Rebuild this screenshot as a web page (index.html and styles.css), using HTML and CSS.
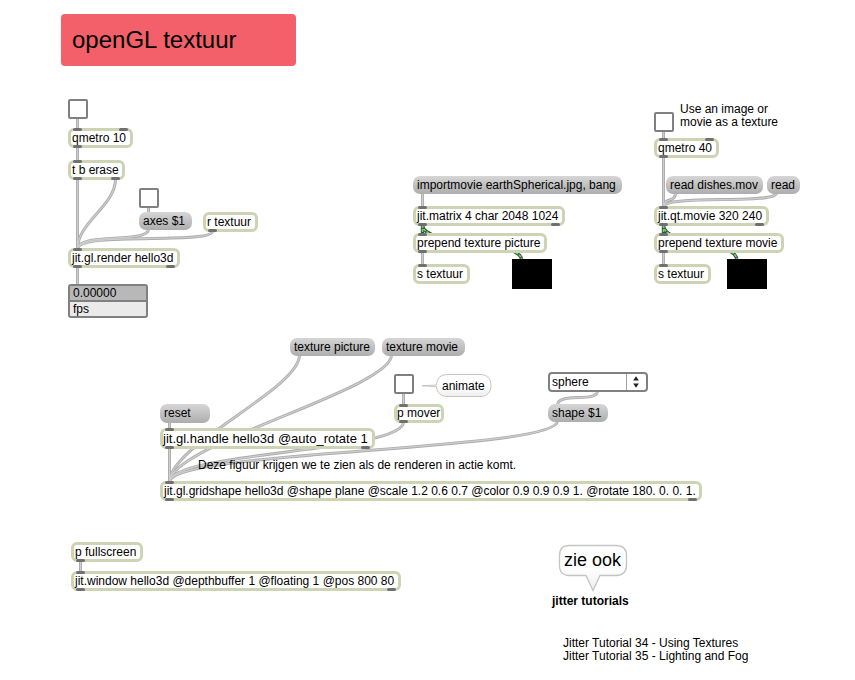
FILE: index.html
```
<!DOCTYPE html>
<html lang="nl">
<head>
<meta charset="utf-8">
<title>openGL textuur</title>
<link rel="stylesheet" href="styles.css">
</head>
<body>
<main class="patch">
  <svg class="cords" width="855" height="680" viewBox="0 0 855 680" fill="none">
    <defs>
      <g id="lines">
        <path d="M77.500 118V130M77.500 147V162M77.500 179V250M77.500 267V285"/>
        <path d="M115.500 179C115.500 206 77.500 222 77.500 249"/>
        <path d="M148.500 207V213M148.500 229C148.500 244 78 232 77.500 249"/>
        <path d="M212.500 231C212.500 245 78 231 77.500 249"/>
        <path d="M422.500 193V208M422.500 252V266"/>
        <path d="M663.500 131V140M663.500 157V208M663.500 252V266"/>
        <path d="M675.500 193C675.500 203 664 197 663.500 207M776.500 193C776.500 205 664 194 663.500 207"/>
        <path d="M403.500 393V406M169.500 421V430M169.500 447V483M80.500 561V573"/>
        <path d="M299.500 355C299.500 389 169.500 445 169.500 482"/>
        <path d="M391.500 355C391.500 389 169.500 445 169.500 482"/>
        <path d="M403.500 422C403.500 452 169.500 452 169.500 482"/>
        <path d="M557.500 421C557.500 451 169.500 450 169.500 482"/>
        <path d="M597.500 391C597.500 403 557.500 392 557.500 405"/>
      </g>
      <g id="matrix-lines">
        <path d="M422.500 225V235M422.500 225C422.500 247 522 238 522 261"/>
        <path d="M663.500 225V235M663.500 225C663.500 247 737 238 737 261"/>
      </g>
    </defs>
    <use href="#lines" class="cord-edge"/>
    <use href="#lines" class="cord-core"/>
    <use href="#matrix-lines" class="matrix-edge"/>
    <use href="#matrix-lines" class="matrix-core"/>
  </svg>

  <h1 class="title">openGL textuur</h1>

  <div class="toggle render-toggle"></div>
  <div class="object qmetro10"><i class="in"></i><i class="in last"></i><i class="out"></i><span>qmetro 10</span></div>
  <div class="object erase"><i class="in"></i><i class="out"></i><i class="out last"></i><span>t b erase</span></div>
  <div class="toggle axes-toggle"></div>
  <div class="message axes"><span>axes $1</span></div>
  <div class="object receive"><i class="out"></i><span>r textuur</span></div>
  <div class="object render"><i class="in"></i><i class="out"></i><i class="out last"></i><span>jit.gl.render hello3d</span></div>
  <div class="fps"><div class="fps-value">0.00000</div><div class="fps-label">fps</div></div>

  <div class="message import"><span>importmovie earthSpherical.jpg, bang</span></div>
  <div class="object matrix"><i class="in"></i><i class="out"></i><i class="out last"></i><span>jit.matrix 4 char 2048 1024</span></div>
  <div class="object prepend-picture"><i class="in"></i><i class="out"></i><span>prepend texture picture</span></div>
  <div class="object send-picture"><i class="in"></i><span>s textuur</span></div>
  <div class="pwindow pwindow-picture"></div>

  <p class="comment use-image">Use an image or<br>movie as a texture</p>
  <div class="toggle movie-toggle"></div>
  <div class="object qmetro40"><i class="in"></i><i class="in last"></i><i class="out"></i><span>qmetro 40</span></div>
  <div class="message dishes"><span>read dishes.mov</span></div>
  <div class="message read"><span>read</span></div>
  <div class="object movie"><i class="in"></i><i class="out"></i><i class="out last"></i><span>jit.qt.movie 320 240</span></div>
  <div class="object prepend-movie"><i class="in"></i><i class="out"></i><span>prepend texture movie</span></div>
  <div class="object send-movie"><i class="in"></i><span>s textuur</span></div>
  <div class="pwindow pwindow-movie"></div>

  <div class="message tex-picture"><span>texture picture</span></div>
  <div class="message tex-movie"><span>texture movie</span></div>
  <div class="toggle mover-toggle"></div>
  <div class="bubble animate">
    <svg width="71" height="25" viewBox="0 0 71 25"><defs><linearGradient id="shade" x1="0" y1="0" x2="0" y2="1"><stop offset=".5" stop-color="#fff"/><stop offset="1" stop-color="#eee"/></linearGradient></defs><path d="M0 12.800L14.500 12C15 5 18.500 1.500 26 1.500H58C65 1.500 69 5.500 69 12.500S65 23.500 58 23.500H26C18.500 23.500 15 20 14.500 13.600Z" fill="url(#shade)" stroke="#c4c4c4"/></svg>
    <span>animate</span>
  </div>
  <div class="object mover"><i class="in"></i><i class="out"></i><span>p mover</span></div>
  <div class="menu"><span>sphere</span><svg width="20" height="16" viewBox="0 0 20 16"><path d="M6.500 6.500L9.500 2L12.500 6.500ZM6.500 9.500L9.500 14L12.500 9.500Z" fill="#222"/></svg></div>
  <div class="message shape"><span>shape $1</span></div>
  <div class="message reset"><span>reset</span></div>
  <div class="object handle"><i class="in"></i><i class="out"></i><i class="out last"></i><span>jit.gl.handle hello3d @auto_rotate 1</span></div>
  <p class="comment figure">Deze figuur krijgen we te zien als de renderen in actie komt.</p>
  <div class="object gridshape"><i class="in"></i><i class="out"></i><i class="out last"></i><span>jit.gl.gridshape hello3d @shape plane @scale 1.2 0.6 0.7 @color 0.9 0.9 0.9 1. @rotate 180. 0. 0. 1.</span></div>

  <div class="object fullscreen"><i class="out"></i><span>p fullscreen</span></div>
  <div class="object window"><i class="in"></i><i class="out"></i><i class="out last"></i><span>jit.window hello3d @depthbuffer 1 @floating 1 @pos 800 80</span></div>

  <div class="bubble see-also">
    <svg width="70" height="48" viewBox="0 0 70 48"><path d="M11.500 1.500H58C65 1.500 68.500 5 68.500 11.500V21C68.500 28 65 31.500 58 31.500H42L35 46.500L28 31.500H11.500C4.500 31.500 1.500 28 1.500 21V11.500C1.500 5 4.500 1.500 11.500 1.500Z" fill="url(#shade)" stroke="#c4c4c4" stroke-width="1.300"/></svg>
    <span>zie ook</span>
  </div>
  <p class="comment tutorials">jitter tutorials</p>
  <p class="comment links">Jitter Tutorial 34 - Using Textures<br>Jitter Tutorial 35 - Lighting and Fog</p>
</main>
</body>
</html>
```
FILE: styles.css
```
* { box-sizing: border-box; }
body {
  margin: 0;
  background: #fff;
  color: #000;
  font: 12px/13px "Liberation Sans", Arial, sans-serif;
}
.patch { position: relative; width: 855px; height: 680px; overflow: hidden; white-space: nowrap; }
.patch > * { position: absolute; margin: 0; }

/* patch cords */
.cords { left: 0; top: 0; }
.cord-edge { stroke: #acacac; stroke-width: 3; }
.cord-core { stroke: #cecece; stroke-width: 1.2; }
.matrix-edge { stroke: #285c30; stroke-width: 3.4; }
.matrix-core { stroke: #7fc47f; stroke-width: 1.6; stroke-dasharray: 3 1; }

.title {
  left: 61px; top: 14px; width: 235px; height: 52px;
  padding-left: 11px;
  border-radius: 4px;
  background: #f3606a;
  font-size: 24px; font-weight: 400; line-height: 52px;
}

/* boxes */
.object {
  height: 20px;
  padding-left: 1px;
  border: 3px solid #cdd4b3;
  border-radius: 6px;
  background: #fff;
  line-height: 14px;
}
.object span { position: relative; }
.object i {
  position: absolute;
  left: 2px;
  width: 9px; height: 3px;
  border-radius: 1.5px;
  background: #707070;
}
.object .in { top: -3px; }
.object .out { bottom: -3px; }
.object .last { left: auto; right: 2px; }
.message {
  height: 18px;
  padding-left: 4px;
  border-radius: 7px;
  background: linear-gradient(#d6d6d6, #adadad);
  line-height: 18px;
}
.toggle { width: 20px; height: 20px; border: 2px solid #808080; border-radius: 2px; background: #fff; }
.pwindow { top: 259px; width: 40px; height: 30px; background: #000; }
.bubble svg { display: block; }
.bubble span { position: absolute; }

/* renderer */
.render-toggle { left: 68px; top: 99px; }
.qmetro10 { left: 68px; top: 128px; width: 65px; }
.erase { left: 68px; top: 160px; width: 57px; }
.axes-toggle { left: 139px; top: 188px; }
.axes { left: 139px; top: 212px; width: 53px; }
.receive { left: 203px; top: 212px; width: 55px; }
.render { left: 68px; top: 248px; width: 112px; }
.fps {
  left: 68px; top: 284px; width: 80px; height: 34px;
  border: 2px solid #808080; border-radius: 3px;
  background: #eaeaea;
}
.fps div { padding-left: 3px; line-height: 14px; }
.fps .fps-value { height: 16px; border-bottom: 2px solid #808080; background: #b8b8b8; }

/* picture texture */
.import { left: 413px; top: 176px; width: 209px; }
.matrix { left: 413px; top: 206px; width: 152px; }
.prepend-picture { left: 413px; top: 233px; width: 134px; }
.send-picture { left: 413px; top: 264px; width: 57px; }
.pwindow-picture { left: 512px; }

/* movie texture */
.use-image { left: 680px; top: 103px; }
.movie-toggle { left: 654px; top: 112px; }
.qmetro40 { left: 654px; top: 138px; width: 65px; }
.dishes { left: 666px; top: 176px; width: 97px; }
.read { left: 767px; top: 176px; width: 33px; }
.movie { left: 654px; top: 206px; width: 115px; }
.prepend-movie { left: 654px; top: 233px; width: 130px; }
.send-movie { left: 654px; top: 264px; width: 57px; }
.pwindow-movie { left: 727px; }

/* shape */
.tex-picture { left: 290px; top: 338px; width: 85px; }
.tex-movie { left: 382px; top: 338px; width: 83px; }
.mover-toggle { left: 394px; top: 374px; }
.animate { left: 422px; top: 373px; }
.animate span { left: 20px; top: 7px; }
.mover { left: 394px; top: 404px; width: 50px; height: 19px; line-height: 13px; }
.mover span { left: -1px; }
.menu {
  left: 548px; top: 372px; width: 100px; height: 20px;
  display: flex; justify-content: space-between;
  padding-left: 2px;
  border: 2px solid #808080; border-radius: 4px;
  background: #fff;
  line-height: 16px;
}
.menu svg { border-left: 1px solid #a0a0a0; }
.shape { left: 548px; top: 404px; width: 60px; }
.reset { left: 160px; top: 404px; width: 50px; height: 19px; }
.handle { left: 160px; top: 428px; width: 215px; height: 21px; font-size: 13px; line-height: 15px; }
.handle span { left: -1px; }
.figure { left: 198px; top: 459px; }
.gridshape { left: 160px; top: 481px; width: 542px; }

/* output window */
.fullscreen { left: 71px; top: 542px; width: 72px; }
.window { left: 71px; top: 571px; width: 330px; }

/* references */
.see-also { left: 558px; top: 544px; }
.see-also span { left: 6px; top: 6px; font-size: 18px; line-height: 20px; }
.tutorials { left: 552px; top: 595px; font-weight: 700; }
.links { left: 563px; top: 637px; }
```
